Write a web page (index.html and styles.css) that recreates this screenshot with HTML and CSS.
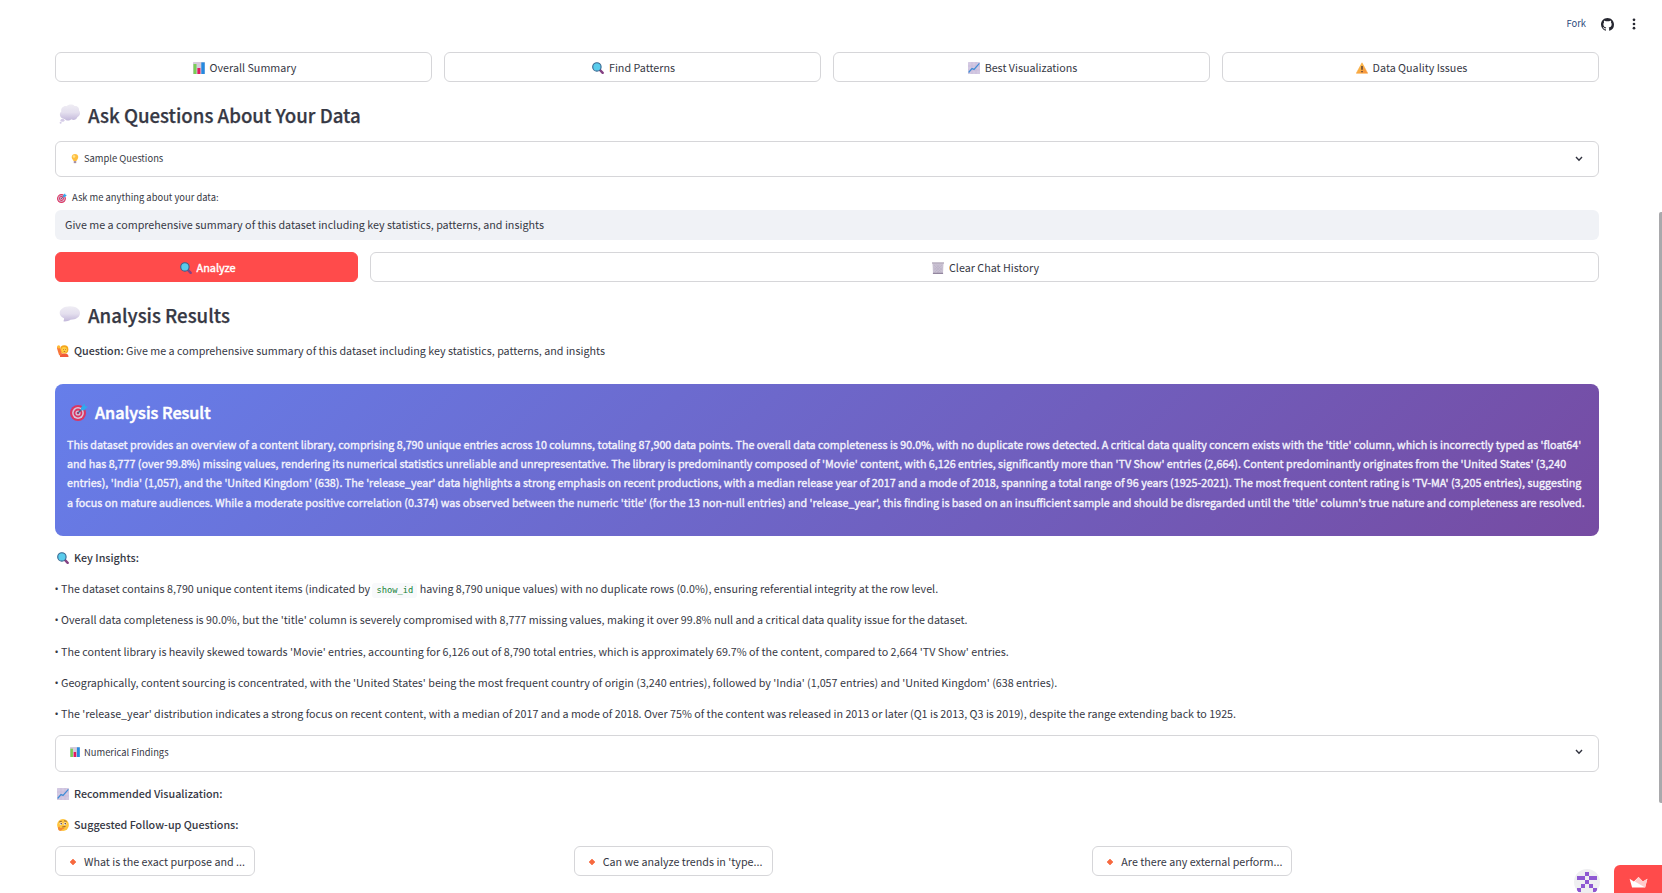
FILE: index.html
```
<!DOCTYPE html>
<html lang="en">
<head>
<meta charset="utf-8">
<title>Dataset Analysis</title>
<link rel="stylesheet" href="styles.css">
</head>
<body>
<svg class="defs" width="0" height="0" aria-hidden="true">
<defs>
<linearGradient id="cloud" x1="0" y1="0" x2="0" y2="1"><stop offset="0" stop-color="#efedf4"/><stop offset=".5" stop-color="#e4dfee"/><stop offset="1" stop-color="#c2b7da"/></linearGradient>
<linearGradient id="amber" x1="0" y1="0" x2="1" y2="1"><stop offset="0" stop-color="#ffd04a"/><stop offset="1" stop-color="#f58a3c"/></linearGradient>
<symbol id="bars" viewBox="0 0 12 12"><rect width="12" height="12" rx=".6" fill="#d5cbdc"/><rect x=".5" y="2" width="3" height="10" fill="#78cf55"/><rect x="4.4" y="6" width="3" height="6" fill="#e3195f"/><rect x="8.3" y=".4" width="3.4" height="11.6" fill="#258ae0"/></symbol>
<symbol id="lens" viewBox="0 0 12 12"><path d="M7.6 7.6 10.7 10.8" stroke="#854183" stroke-width="2.4" stroke-linecap="round"/><circle cx="4.9" cy="4.9" r="4.2" fill="#59ccec" stroke="#35658f" stroke-width="1.1"/></symbol>
<symbol id="trend" viewBox="0 0 12 12"><rect width="12" height="12" rx=".6" fill="#d3c9e2"/><path d="M0 4H12M0 8H12M4 0V12M8 0V12" stroke="#c2b2d4" stroke-width=".5"/><path d="M.6 10.5 4 6.5 6 7.4 11.4 1.4" fill="none" stroke="#3f8cd6" stroke-width="1.2"/></symbol>
<symbol id="warn" viewBox="0 0 12 12"><path d="M6 .8 11.7 11.3H.3Z" fill="url(#amber)" stroke="#f9a944" stroke-width=".6" stroke-linejoin="round"/><path d="M6 4V7.8M6 9V10.3" stroke="#5b4038" stroke-width="1.5"/></symbol>
<symbol id="thought" viewBox="0 0 22 20"><path d="M4 14.5C.5 13.500 0 9 2.300 7.500 1.500 4 5 1.500 7.500 2.200 9.500 0 14 0 15.500 2 19 1.500 20.500 4.500 20 6.500 22 8.500 21 12 18.500 13 17.500 16 14 16.500 12.500 15.300 10.500 17 7 17 6 15.300Z" fill="url(#cloud)"/><ellipse cx="3.500" cy="16.200" rx="2" ry="1.500" fill="#d5cce7"/><circle cx="1.600" cy="18.700" r="1" fill="#d5cce7"/></symbol>
<symbol id="speech" viewBox="0 0 22 20"><path d="M11 2.200C17 2.200 21 5 21 9S17 15.700 11.500 15.700C9.500 17 7 17.600 4.300 17.300 5 16 5.200 15 5 14.200 2.300 13 .7 11.200.7 9 .7 5 5 2.200 11 2.200Z" fill="url(#cloud)"/></symbol>
<symbol id="bulb" viewBox="0 0 10 12"><path d="M5 0C1 0 .2 4 2 6.200L3.300 8.500H6.700L8 6.200C9.800 4 9 0 5 0Z" fill="#ffbf3f"/><circle cx="3.800" cy="3" r="1.500" fill="#ffe48c"/><path d="M3.500 8.500H6.500V11H3.500Z" fill="#a58fa0"/></symbol>
<symbol id="target" viewBox="0 0 18 18"><circle cx="8" cy="10" r="8" fill="#dc3561"/><circle cx="8" cy="10" r="5.900" fill="#d6c6de"/><circle cx="8" cy="10" r="4.400" fill="#dc3561"/><circle cx="8" cy="10" r="2.600" fill="#d6c6de"/><circle cx="8" cy="10" r="1.300" fill="#b93863"/><path d="M8 10 13 5" stroke="#3d6793" stroke-width="1.200"/><path d="M11 4.500 14.500.500 15 3 17.800 3.800 14 7.500 11 7Z" fill="#31a8ed"/></symbol>
<symbol id="bin" viewBox="0 0 12 12"><path d="M.5 1.500H11.500L11 11.500H1Z" fill="#c9c1d2"/><path d="M2 3 9.700 10.500M4.500 3 10 8M2 5.500 7.500 11M10 3 2.500 10.500M7.500 3 2.200 8M10.200 5.500 5 11" stroke="#b4aac2" stroke-width=".5"/><path d="M0 1H12M.9 11.300H11.100" stroke="#93869f" stroke-width="1.200"/></symbol>
<symbol id="raised" viewBox="0 0 12 12"><path d="M3 8.500H9Q11.500 9 11.500 12H3Z" fill="#f15a3a"/><circle cx="7.300" cy="4.400" r="4.100" fill="#f4a51c"/><circle cx="7.100" cy="5" r="2.900" fill="#ffcf43"/><path d="M1.500 3 3.300 9" stroke="#f8763a" stroke-width="3" stroke-linecap="round"/><circle cx="1.700" cy="1.900" r="1.600" fill="#ffba35"/><path d="M6 4.500H6.700M8.300 4.500H9M6.700 6.500H8.200" stroke="#a9552c" stroke-width=".8"/></symbol>
<symbol id="think" viewBox="0 0 12 12"><circle cx="6" cy="6" r="5.900" fill="#ffc43c"/><circle cx="4" cy="4.800" r="1.400" fill="#fff"/><circle cx="8" cy="4.800" r="1.400" fill="#fff"/><circle cx="4.200" cy="4.700" r=".8" fill="#4b302e"/><circle cx="8.200" cy="4.700" r=".8" fill="#4b302e"/><path d="M2.300 2.900 4.800 2.300M7 1.800 9.700 2.300M5.200 8 8.500 7.500" stroke="#7a4929" stroke-width=".8"/><path d="M.8 8.500 2.500 7.500 3 9 7.500 8.500Q8 9.500 5.500 10.200 5 12 3 12 .8 11.500.8 8.500Z" fill="#f28b32"/></symbol>
<symbol id="diamond" viewBox="0 0 12 12"><path d="M6 3 9 6 6 9 3 6Z" fill="#f7693f" stroke="#f7693f" stroke-width=".6" stroke-linejoin="round"/></symbol>
</defs>
</svg>

<header class="toolbar">
  <a class="fork">Fork</a>
  <svg class="github" viewBox="0 0 16 16"><path fill="#262730" d="M8 0C3.580 0 0 3.580 0 8c0 3.540 2.290 6.530 5.470 7.590.4.070.550-.170.550-.380 0-.190-.010-.820-.010-1.490-2.010.370-2.530-.490-2.690-.940-.090-.230-.480-.940-.820-1.130-.280-.150-.680-.520-.010-.530.630-.010 1.080.580 1.230.820.720 1.210 1.870.870 2.330.660.070-.520.280-.870.510-1.070-1.780-.200-3.640-.890-3.640-3.950 0-.870.310-1.590.820-2.150-.080-.200-.360-1.020.080-2.120 0 0 .670-.210 2.200.820.640-.180 1.320-.270 2-.270s1.360.090 2 .270c1.530-1.040 2.200-.820 2.200-.820.440 1.100.160 1.920.080 2.120.510.560.820 1.270.820 2.150 0 3.070-1.870 3.750-3.650 3.950.290.250.540.730.540 1.480 0 1.070-.010 1.930-.010 2.200 0 .210.150.460.550.380A8.010 8.010 0 0 0 16 8c0-4.420-3.580-8-8-8Z"/></svg>
  <svg class="dots" viewBox="0 0 4 12"><circle cx="2" cy="1.800" r="1.350"/><circle cx="2" cy="6" r="1.350"/><circle cx="2" cy="10.200" r="1.350"/></svg>
</header>

<main class="content">
  <div class="quick">
    <button class="btn"><svg class="emoji"><use href="#bars"/></svg><span>Overall Summary</span></button>
    <button class="btn"><svg class="emoji"><use href="#lens"/></svg><span>Find Patterns</span></button>
    <button class="btn"><svg class="emoji"><use href="#trend"/></svg><span>Best Visualizations</span></button>
    <button class="btn"><svg class="emoji"><use href="#warn"/></svg><span>Data Quality Issues</span></button>
  </div>

  <h3 class="heading"><svg class="emoji-xl"><use href="#thought"/></svg><span>Ask Questions About Your Data</span></h3>

  <div class="expander"><svg class="emoji-sm"><use href="#bulb"/></svg><span>Sample Questions</span><svg class="chevron" viewBox="0 0 8 6"><path d="M1 1 4 4.200 7 1"/></svg></div>

  <label class="label"><svg class="emoji-sm"><use href="#target"/></svg><span>Ask me anything about your data:</span></label>
  <div class="input"><span>Give me a comprehensive summary of this dataset including key statistics, patterns, and insights</span></div>

  <div class="actions">
    <button class="btn primary"><svg class="emoji"><use href="#lens"/></svg><span>Analyze</span></button>
    <button class="btn"><svg class="emoji"><use href="#bin"/></svg><span>Clear Chat History</span></button>
  </div>

  <h3 class="heading"><svg class="emoji-xl"><use href="#speech"/></svg><span>Analysis Results</span></h3>

  <p class="line question"><svg class="emoji"><use href="#raised"/></svg><span><strong>Question:</strong> Give me a comprehensive summary of this dataset including key statistics, patterns, and insights</span></p>

  <section class="result">
    <h4 class="result-title"><svg class="emoji-lg"><use href="#target"/></svg><span>Analysis Result</span></h4>
    <p class="result-text">This dataset provides an overview of a content library, comprising 8,790 unique entries across 10 columns, totaling 87,900 data points. The overall data completeness is 90.0%, with no duplicate rows detected. A critical data quality concern exists with the 'title' column, which is incorrectly typed as 'float64'<br>
    and has 8,777 (over 99.8%) missing values, rendering its numerical statistics unreliable and unrepresentative. The library is predominantly composed of 'Movie' content, with 6,126 entries, significantly more than 'TV Show' entries (2,664). Content predominantly originates from the 'United States' (3,240<br>
    entries), 'India' (1,057), and the 'United Kingdom' (638). The 'release_year' data highlights a strong emphasis on recent productions, with a median release year of 2017 and a mode of 2018, spanning a total range of 96 years (1925-2021). The most frequent content rating is 'TV-MA' (3,205 entries), suggesting<br>
    a focus on mature audiences. While a moderate positive correlation (0.374) was observed between the numeric 'title' (for the 13 non-null entries) and 'release_year', this finding is based on an insufficient sample and should be disregarded until the 'title' column's true nature and completeness are resolved.</p>
  </section>

  <p class="line"><svg class="emoji"><use href="#lens"/></svg><strong>Key Insights:</strong></p>
  <p class="insight"><span class="bullet">•</span>The dataset contains 8,790 unique content items (indicated by <code>show_id</code> having 8,790 unique values) with no duplicate rows (0.0%), ensuring referential integrity at the row level.</p>
  <p class="insight"><span class="bullet">•</span>Overall data completeness is 90.0%, but the 'title' column is severely compromised with 8,777 missing values, making it over 99.8% null and a critical data quality issue for the dataset.</p>
  <p class="insight"><span class="bullet">•</span>The content library is heavily skewed towards 'Movie' entries, accounting for 6,126 out of 8,790 total entries, which is approximately 69.7% of the content, compared to 2,664 'TV Show' entries.</p>
  <p class="insight"><span class="bullet">•</span>Geographically, content sourcing is concentrated, with the 'United States' being the most frequent country of origin (3,240 entries), followed by 'India' (1,057 entries) and 'United Kingdom' (638 entries).</p>
  <p class="insight"><span class="bullet">•</span>The 'release_year' distribution indicates a strong focus on recent content, with a median of 2017 and a mode of 2018. Over 75% of the content was released in 2013 or later (Q1 is 2013, Q3 is 2019), despite the range extending back to 1925.</p>

  <div class="expander findings"><svg class="emoji-sm"><use href="#bars"/></svg><span>Numerical Findings</span><svg class="chevron" viewBox="0 0 8 6"><path d="M1 1 4 4.200 7 1"/></svg></div>

  <p class="line"><svg class="emoji"><use href="#trend"/></svg><strong>Recommended Visualization:</strong></p>
  <p class="line"><svg class="emoji"><use href="#think"/></svg><strong>Suggested Follow-up Questions:</strong></p>

  <div class="followups">
    <button class="btn"><svg class="emoji"><use href="#diamond"/></svg><span>What is the exact purpose and ...</span></button>
    <button class="btn"><svg class="emoji"><use href="#diamond"/></svg><span>Can we analyze trends in 'type...</span></button>
    <button class="btn"><svg class="emoji"><use href="#diamond"/></svg><span>Are there any external perform...</span></button>
  </div>
</main>

<div class="scrollbar"></div>
<div class="avatar"><svg viewBox="0 0 26 26"><path fill="#8e58d2" d="M11 3h4v4h-4zM3 7h8v4H3zM15 7h8v4h-8zM11 11h4v4h-4zM7 15h4v4H7zM15 15h4v4h-4zM3 19h4v4H3zM19 19h4v4h-4z"/></svg></div>
<div class="badge"><svg viewBox="0 0 20 12"><path d="M.3 2 5 5 10 0 14.800 5 19.700 2 17.200 11.500H3Z" fill="#fff"/><path d="M10 0 14.800 5 19.700 2 17.200 11.500 6 5Z" fill="#ffc9c9"/></svg></div>
</body>
</html>
```
FILE: styles.css
```
* { box-sizing: border-box; }
body {
  margin: 0;
  height: 893px;
  overflow: hidden;
  background: #fff;
  color: #363844;
  font-family: "Noto Sans CJK SC", "Noto Sans", sans-serif;
  font-size: 10.74px;
  line-height: 19.2px;
}
.defs { position: absolute; }
svg { display: block; flex: none; }
h3, h4, p { margin: 0; }
p { font-weight: 400; }
h3, h4, strong { font-weight: 500; }
.toolbar {
  display: flex;
  align-items: center;
  justify-content: flex-end;
  height: 48px;
  padding-right: 26px;
}
.fork { font-size: 9.4px; color: #2f4a7c; }
.github { width: 13px; height: 13px; margin-left: 15px; }
.dots { width: 4px; height: 12px; margin-left: 18px; fill: #262730; }
.content { width: 1544px; margin: 4px 0 0 55px; }
.quick { display: grid; grid-template-columns: repeat(4, 1fr); gap: 12px; }
.btn {
  display: flex;
  align-items: center;
  justify-content: center;
  height: 30px;
  padding: 1px 9px 0 10px;
  border: 1px solid #d6d6d9;
  border-radius: 6px;
  background: #fff;
  color: inherit;
  font: inherit;
  white-space: nowrap;
}
.emoji { width: 12px; height: 12px; margin: 0 5px 0 2px; }
.btn .emoji { margin: 0 5px 0 1px; }
.emoji-sm { width: 10px; height: 10px; margin: 0 5px 0 2px; }
.expander .emoji-sm { margin-right: 4px; }
.emoji-lg { width: 18px; height: 18px; margin: 0 7px 0 3px; }
.emoji-xl { width: 22px; height: 20px; margin: -1px 7px 0 4px; }
.heading {
  display: flex;
  align-items: center;
  height: 25px;
  margin-top: 20px;
  font-size: 18.65px;
  -webkit-text-stroke: 0.25px #363844;
}
.heading svg { -webkit-text-stroke: 0; }
.expander {
  display: flex;
  align-items: center;
  height: 36px;
  margin-top: 14px;
  padding: 0 15px 0 12px;
  border: 1px solid #d6d6d9;
  border-radius: 6px;
  font-size: 9.4px;
}
.chevron { width: 8px; height: 6px; margin-left: auto; fill: none; stroke: #31333f; stroke-width: 1.4; }
.label { display: flex; align-items: center; height: 18px; margin-top: 12px; font-size: 9.4px; }
.input {
  display: flex;
  align-items: center;
  height: 30px;
  margin-top: 3px;
  padding-left: 10px;
  border-radius: 6px;
  background: #f0f2f6;
}
.actions { display: grid; grid-template-columns: 303px 1fr; gap: 12px; margin-top: 12px; }
.primary {
  background: #ff4b4b;
  border-color: #ff4b4b;
  color: #fff;
  font-size: 10.9px;
  -webkit-text-stroke: 0.4px #fff;
}
.line { display: flex; align-items: center; height: 19.2px; margin-top: 12px; white-space: nowrap; }
.question { margin-top: 14px; }
.result {
  height: 152px;
  margin-top: 23.8px;
  padding: 16px 12px 0;
  border-radius: 8px;
  background: linear-gradient(135deg, #667eea 0%, #764ba2 100%);
  color: #fff;
}
.result-title {
  display: flex;
  align-items: center;
  height: 25px;
  font-size: 16.2px;
  -webkit-text-stroke: 0.5px #fff;
}
.result-text { margin-top: 10px; color: #f4f3fc; white-space: nowrap; -webkit-text-stroke: 0.35px #f4f3fc; }
.insight { height: 19.2px; margin-top: 12px; white-space: nowrap; }
.bullet { display: inline-block; width: 6px; font-family: "Open Sans", sans-serif; font-size: 11px; line-height: 1; text-indent: -0.5px; }
code {
  display: inline-block;
  padding: 1px 4px;
  border-radius: 3px;
  background: #f8f9fb;
  color: #158237;
  font-family: "DejaVu Sans Mono", monospace;
  font-size: 8.75px;
  line-height: 13px;
}
.findings { height: 37px; margin-top: 11.8px; padding-bottom: 2px; }
.followups { display: grid; grid-template-columns: repeat(3, 1fr); gap: 12px; margin-top: 12px; justify-items: start; }
.scrollbar { position: absolute; right: 0; top: 212px; width: 3px; height: 591px; background: #a9a9ac; border-radius: 2px 0 0 2px; }
.avatar { position: absolute; left: 1574px; top: 869px; width: 26px; height: 26px; border-radius: 50%; overflow: hidden; background: #efeff1; }
.badge {
  position: absolute;
  left: 1614px;
  top: 865px;
  width: 48px;
  height: 28px;
  padding: 12px 0 0 15px;
  border-radius: 6px 0 0 0;
  background: #ff4b4b;
}
.badge svg { width: 19px; height: 11px; }
```
